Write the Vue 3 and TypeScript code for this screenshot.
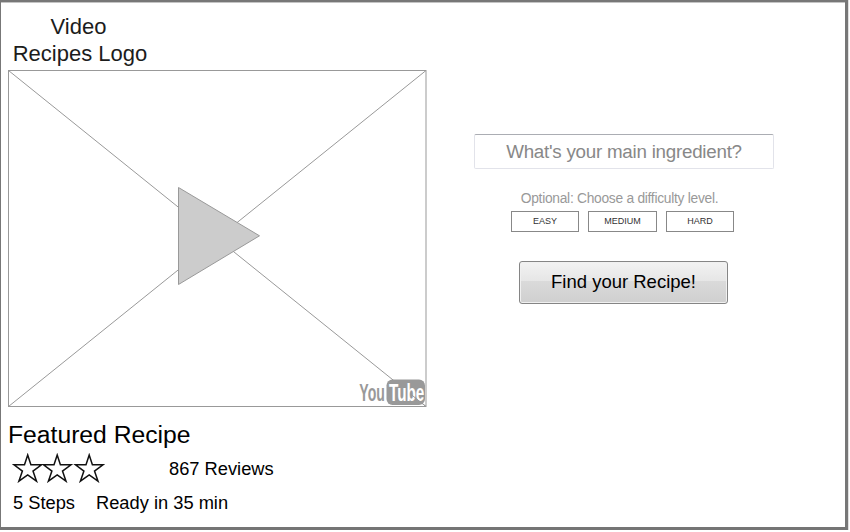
<script setup lang="ts">
import { ref } from 'vue'

const ingredient = ref<string>('')
const levels: string[] = ['EASY', 'MEDIUM', 'HARD']
const stars: number[] = [14, 43.5, 75.5]
</script>

<template>
  <main class="page">
    <section class="featured">
      <h1 class="logo"><span class="first">Video</span>Recipes Logo</h1>
      <svg class="video" width="419" height="337" viewBox="0 0 419 337">
        <rect class="line" x="0.5" y="0.5" width="417.5" height="336" />
        <path class="line" d="M0.5 0.5L418 336.5M418 0.5L0.5 336.5" />
        <path class="play" d="M170.5 117.5L251.5 165.8L170.5 214.5Z" />
        <rect class="badge" x="378.5" y="309.5" width="38.5" height="25.5" rx="6" />
        <text class="you" transform="translate(351.3 330.5) scale(.6 1)">You</text>
        <text class="tube" transform="translate(381 330.5) scale(.65 1)">Tube</text>
        <path class="line" d="M402 323.6L418 336.5" />
      </svg>
      <h2 class="title">Featured Recipe</h2>
      <div class="rating">
        <svg class="stars" width="110" height="30" viewBox="0 0 110 30">
          <path
            v-for="x in stars"
            :key="x"
            :transform="`translate(${x} 1)`"
            d="M13.7 1L16.9 10.8H27.5L19 17.1L22.5 27.2L13.7 21L4.9 27.2L8.4 17.1L0 10.8H10.5Z"
          />
        </svg>
        <span class="reviews">867 Reviews</span>
      </div>
      <div class="facts"><span>5 Steps</span><span>Ready in 35 min</span></div>
    </section>
    <form class="search" @submit.prevent>
      <input v-model="ingredient" class="ingredient" type="text" placeholder="What's your main ingredient?" />
      <p class="hint">Optional: Choose a difficulty level.</p>
      <div class="levels">
        <button v-for="level in levels" :key="level" type="button" class="level">{{ level }}</button>
      </div>
      <button class="find" type="submit">Find your Recipe!</button>
    </form>
  </main>
</template>

<style>
body {
  background: #fff;
}
</style>

<style scoped>
.page {
  box-sizing: border-box;
  width: 848px;
  height: 530px;
  border: solid #777;
  border-width: 2px 3px 3px 1px;
  border-bottom-color: #757575;
  box-shadow: inset 0 1px #c4c4c4, 0 0 0 1px #e0e0e0;
  display: flex;
  font-family: "Liberation Sans", Arial, sans-serif;
  color: #000;
}
h1, h2, p {
  margin: 0;
  font-weight: 400;
}
.featured {
  width: 419px;
  padding: 11px 0 0 7px;
  display: flex;
  flex-direction: column;
}
.logo {
  width: 144px;
  height: 57px;
  font-size: 22px;
  line-height: 27px;
  text-align: center;
  color: #1c1c1c;
}
.first {
  display: block;
  padding-right: 3px;
}
.video {
  display: block;
  flex: none;
}
.line {
  fill: none;
  stroke: #999;
}
.play {
  fill: #ccc;
  stroke: #999;
}
.badge {
  fill: #999;
}
.you, .tube {
  font-family: "Liberation Sans", Arial, sans-serif;
  font-size: 23.5px;
  font-weight: 700;
  fill: #999;
}
.tube {
  fill: #fff;
}
.title {
  margin-top: 13px;
  font-size: 24.7px;
  line-height: 30px;
}
.rating {
  display: flex;
  align-items: center;
  height: 34px;
}
.stars {
  flex: none;
  margin: 2px 0 0 -8px;
  fill: #fff;
  stroke: #111;
  stroke-width: 1.5;
}
.reviews {
  margin: 4px 0 0 59px;
  font-size: 18.3px;
}
.facts {
  display: flex;
  gap: 21px;
  padding: 2px 0 0 5px;
  font-size: 18.3px;
  line-height: 34px;
}
.search {
  width: 300px;
  margin-left: 47px;
  padding-top: 132px;
  display: flex;
  flex-direction: column;
  align-items: center;
}
.ingredient {
  box-sizing: border-box;
  width: 300px;
  height: 35px;
  padding: 0;
  border: 1px solid #e2e3ea;
  border-top-color: #abadb3;
  border-radius: 2px;
  background: #fff;
  font: 18.8px "Liberation Sans", Arial, sans-serif;
  letter-spacing: -0.25px;
  text-align: center;
  color: #888;
}
.ingredient::placeholder {
  color: #888;
  opacity: 1;
}
.hint {
  margin: 21px 9px 0 0;
  font-size: 13.8px;
  letter-spacing: -0.28px;
  line-height: 18px;
  color: #999;
}
.levels {
  display: flex;
  gap: 9px;
  margin: 3px 3px 0 0;
}
.level {
  box-sizing: border-box;
  width: 68.6px;
  height: 21px;
  padding: 0 0 1px;
  border: 1px solid #888;
  background: #fff;
  font: 9px "Liberation Sans", Arial, sans-serif;
  color: #333;
}
.find {
  box-sizing: border-box;
  width: 209px;
  height: 43px;
  margin: 29px 1px 0 0;
  padding: 0 0 1px;
  border: 1px solid #858585;
  border-radius: 3px;
  background: linear-gradient(#f2f2f2, #e6e6e6 46%, #dadada 47%, #cfcfcf);
  box-shadow: inset 0 0 0 1px #f0f0f0;
  font: 18.5px "Liberation Sans", Arial, sans-serif;
  color: #000;
}
</style>
